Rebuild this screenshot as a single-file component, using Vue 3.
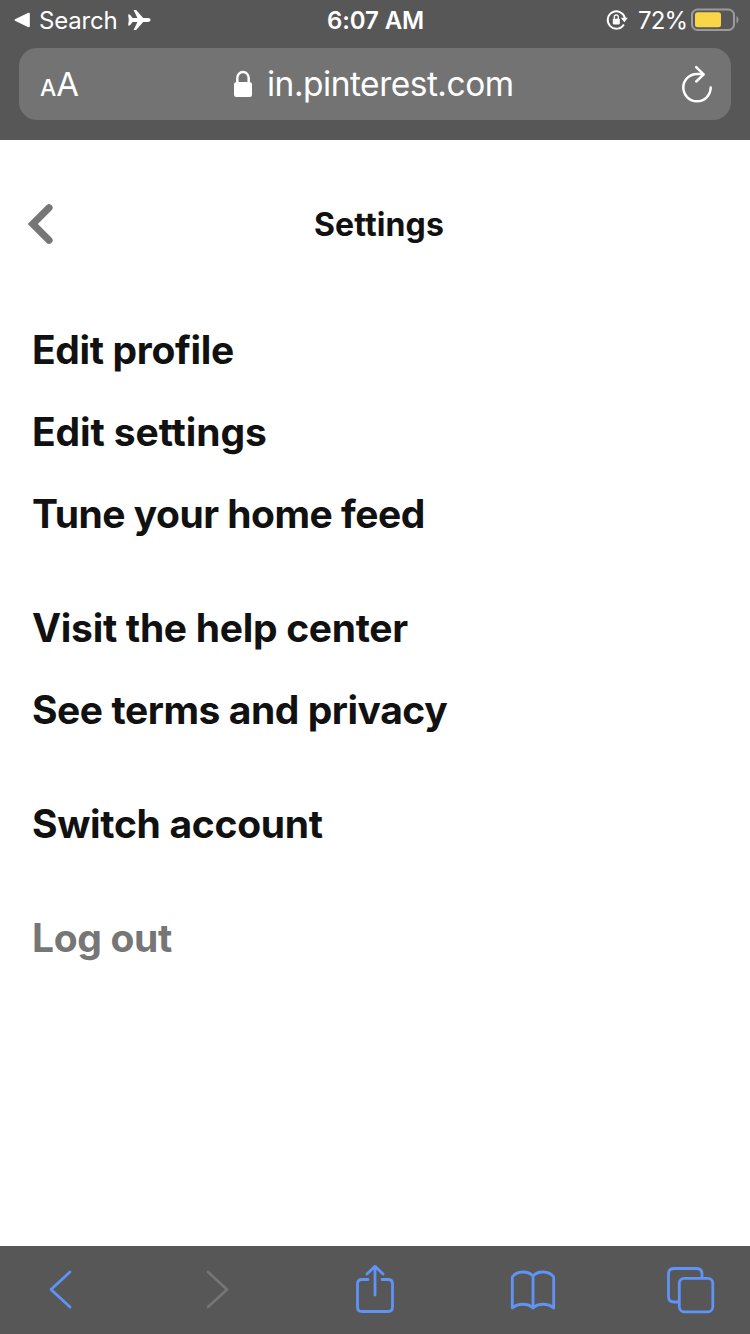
<script setup>
const groups = [
  [{ label: 'Edit profile', id: 'profile' }, { label: 'Edit settings', id: 'settings' }, { label: 'Tune your home feed', id: 'feed' }],
  [{ label: 'Visit the help center', id: 'help' }, { label: 'See terms and privacy', id: 'terms' }],
  [{ label: 'Switch account', id: 'switch' }],
  [{ label: 'Log out', id: 'logout' }],
]
</script>

<template>
  <div class="screen">
    <header class="browser">
      <div class="status">
        <div class="status-left">
          <svg class="tri" width="16" height="16" viewBox="0 0 16 16"><path d="M1 7.200 14.300.8Q15.800.3 15.800 1.800v12.400q0 1.500-1.500 1L1 8.800Q0 8 1 7.200Z" fill="#fff" /></svg>
          <span class="search">Search</span>
          <svg width="24" height="22" viewBox="0 0 24 22"><path d="M1.100 5.600h1.700l2.900 3.500h4.700L6.600 1h2.500l7.100 8.100h4.800c1.500 0 2.600.9 2.600 1.900s-1.100 1.900-2.600 1.900h-4.800L9.100 21H6.600l3.800-8.100H5.700l-2.900 3.500H1.100L1.800 11Z" fill="#fff" /></svg>
        </div>
        <span class="time">6:07 AM</span>
        <div class="status-right">
          <svg width="22" height="22" viewBox="0 0 22 22">
            <path d="M17.900 15.500A8.700 8.700 0 1 1 18.900 9" fill="none" stroke="#fff" stroke-width="1.900" />
            <path d="M14.800 8.800h7l-3.400 4.400Z" fill="#fff" />
            <rect x="6.800" y="9.800" width="7" height="5.600" rx=".8" fill="#fff" />
            <path d="M8.300 10V8a2 2 0 0 1 4 0v2" fill="none" stroke="#fff" stroke-width="1.300" />
          </svg>
          <span class="percent">72%</span>
          <svg class="battery" width="49" height="24" viewBox="0 0 49 24">
            <rect x="2" y="1.500" width="42" height="20.500" rx="5.500" fill="none" stroke="#9b9b9b" stroke-width="2" />
            <rect x="5" y="4.300" width="26" height="15" rx="2.500" fill="#f8d648" />
            <path d="M46.500 8q2 1.200 2 3.700t-2 3.700Z" fill="#9b9b9b" />
          </svg>
        </div>
      </div>
      <div class="address">
        <span class="aa"><span class="small-a">A</span><span class="big-a">A</span></span>
        <div class="site">
          <svg width="20" height="28" viewBox="0 0 20 28"><rect x="1" y="12" width="18" height="15" rx="2.500" fill="#fff" /><path d="M4.300 13V8a5.700 6 0 0 1 11.400 0v5" fill="none" stroke="#fff" stroke-width="2.500" /></svg>
          <span class="url">in.pinterest.com</span>
        </div>
        <svg class="reload" width="34" height="40" viewBox="0 0 34 40" fill="none" stroke="#fff" stroke-width="2.500" stroke-linecap="round" stroke-linejoin="round"><path d="M30.700 23.600A13.700 13.700 0 1 1 17 9.900H23M16.200 3.200 23.700 10.300 16.200 17.500" /></svg>
      </div>
    </header>

    <main>
      <div class="title-bar">
        <svg width="27" height="42" viewBox="0 0 27 42"><path d="M22 3.800 5.800 20 22 36.200" fill="none" stroke="#767676" stroke-width="7.200" stroke-linecap="round" /></svg>
        <h1>Settings</h1>
      </div>
      <nav>
        <ul v-for="(group, i) in groups" :key="i">
          <li v-for="item in group" :key="item.id" :class="item.id"><span>{{ item.label }}</span></li>
        </ul>
      </nav>
    </main>

    <footer class="toolbar">
      <svg class="back" width="24" height="88" viewBox="48 1246 24 88"><path d="M70 1272 51 1289.500 70 1307" /></svg>
      <svg class="forward" width="24" height="88" viewBox="206 1246 24 88"><path d="M208 1272 227 1289.500 208 1307" /></svg>
      <svg class="share" width="40" height="88" viewBox="355 1246 40 88"><path d="M368 1279.500H362Q357.500 1279.500 357.500 1284V1307Q357.500 1311.500 362 1311.500H388Q392.500 1311.500 392.500 1307V1284Q392.500 1279.500 388 1279.500H382M375 1295V1267M367 1274 375 1266.300 383 1274" /></svg>
      <svg class="book" width="46" height="88" viewBox="510 1246 46 88"><path d="M533 1276V1308C528 1303 518 1303 512.300 1308V1277C517 1270.500 528 1270.500 533 1276C538 1270.500 549 1270.500 553.700 1277V1308C548 1303 538 1303 533 1308" /></svg>
      <svg class="tabs" width="50" height="88" viewBox="666 1246 50 88"><path d="M678 1302H674Q668.500 1302 668.500 1296.500V1274Q668.500 1268.500 674 1268.500H696.500Q702 1268.500 702 1274V1277" /><rect x="679.300" y="1278.300" width="33.500" height="33.500" rx="5" /></svg>
    </footer>
  </div>
</template>

<style>
body { margin: 0; }
</style>

<style scoped>
.screen { width: 750px; height: 1334px; display: flex; flex-direction: column; background: #fff; color: #111; font-family: Inter, "Liberation Sans", sans-serif; overflow: hidden; }
svg { display: block; flex: none; }
.browser { height: 140px; flex: none; box-sizing: border-box; background: #575757; color: #fff; }
.status { height: 40px; display: grid; grid-template-columns: 1fr auto 1fr; align-items: center; padding: 0 12px 0 14px; font-size: 24px; line-height: 38px; white-space: nowrap; }
.status span { padding-top: 2px; }
.status-left, .status-right { display: flex; align-items: center; }
.status-right { margin-right: -1px; }
.search { width: 79px; margin: 0 9px; letter-spacing: -.2px; }
.time { font-weight: 600; letter-spacing: -.1px; margin-left: -1px; }
.status-right { justify-content: flex-end; }
.percent { width: 49px; margin: 0 3px 0 10px; letter-spacing: -.9px; }
.address { height: 72px; margin: 8px 19px 0; padding: 0 17px 0 21px; box-sizing: border-box; border-radius: 18px; background: #737373; display: flex; align-items: center; }
.aa { display: flex; align-items: baseline; width: 40px; }
.small-a { font-size: 23px; font-weight: 500; }
.big-a { font-size: 33px; }
.site { display: flex; align-items: center; gap: 14px; margin-left: 153px; }
.reload { margin-left: auto; }
.url { font-size: 33.500px; letter-spacing: -.5px; white-space: nowrap; line-height: 40px; }
main { flex: 1; }
.title-bar { height: 170px; display: grid; grid-template-columns: 27px 1fr 27px; align-items: center; padding: 0 19px 0 27px; box-sizing: border-box; }
h1 { margin: 0; text-align: center; font-size: 32px; line-height: 40px; font-weight: 700; letter-spacing: .1px; font-variant-ligatures: none; }
nav { display: flex; flex-direction: column; gap: 32px; padding-left: 32px; font-variant-ligatures: none; }
ul { list-style: none; margin: 0; padding: 0; }
li { height: 82px; line-height: 80px; font-size: 39px; font-weight: 700; letter-spacing: -.35px; white-space: nowrap; }
.settings { letter-spacing: -.1px; }
.feed { letter-spacing: -.5px; }
.terms { letter-spacing: -.45px; }
.switch, .help { letter-spacing: -.3px; }
.logout { color: #767676; }
.toolbar { height: 88px; flex: none; display: flex; background: #575757; padding-left: 48px; }
.toolbar path, .toolbar rect { fill: none; stroke: #5f93f5; stroke-width: 2.800; stroke-linecap: round; stroke-linejoin: round; }
.toolbar .forward path { stroke: #757575; }
.forward { margin-left: 134px; }
.share { margin-left: 125px; }
.book { margin-left: 115px; }
.tabs { margin-left: 110px; }
</style>
